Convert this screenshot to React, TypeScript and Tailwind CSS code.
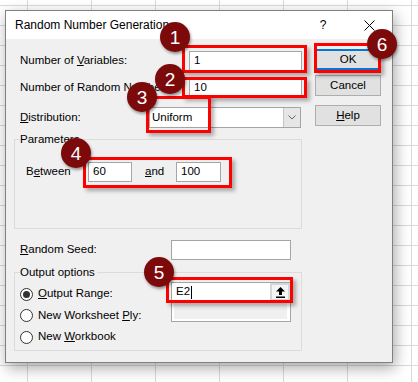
import React from "react";

// Random Number Generation dialog over an Excel sheet, with numbered call-outs

const font = "font-['Liberation_Sans',Arial,sans-serif]";

function TextBox({ className = "", children }: { className?: string; children?: React.ReactNode }) {
  return (
    <div className={`flex h-[20px] shrink-0 items-center border border-[#a5a5a5] bg-white pl-[4px] ${className}`}>
      {children}
    </div>
  );
}

function Button({ children, focused = false, className = "" }: { children: React.ReactNode; focused?: boolean; className?: string }) {
  return (
    <div
      className={`flex h-[21px] w-[66px] items-center justify-center border bg-[#e1e1e1] ${
        focused ? "border-[#0078d7] shadow-[inset_0_0_0_1px_#0078d7]" : "border-[#adadad]"
      } ${className}`}
    >
      {children}
    </div>
  );
}

function Radio({ checked = false }: { checked?: boolean }) {
  return (
    <span className="flex h-[13px] w-[13px] shrink-0 items-center justify-center rounded-full border border-[#333333] bg-white">
      {checked && <span className="h-[7px] w-[7px] rounded-full bg-[#333333]" />}
    </span>
  );
}

function Group({ title, className = "", children }: { title: string; className?: string; children?: React.ReactNode }) {
  return (
    <div className={`relative ml-[8px] w-[288px] shrink-0 border border-[#dcdcdc] ${className}`}>
      <span className="absolute -top-[8px] left-[5px] bg-[#f0f0f0] pr-[2px] leading-[14px]">{title}</span>
      {children}
    </div>
  );
}

function Badge({ n, className }: { n: number; className: string }) {
  return (
    <div
      className={`absolute flex h-[30px] w-[30px] items-center justify-center rounded-full bg-[#7d0a0a] text-[19px] leading-none text-white shadow-[1px_2px_3px_rgba(0,0,0,0.4)] ${className}`}
    >
      {n}
    </div>
  );
}

function RedBox({ className }: { className: string }) {
  return <div className={`absolute border-[3px] border-[#ff0000] shadow-[3px_3px_4px_rgba(0,0,0,0.3)] ${className}`} />;
}

export default function App() {
  return (
    <div
      className={`relative h-[382px] w-[418px] overflow-hidden bg-white bg-[linear-gradient(to_right,#dadada_1px,transparent_1px),linear-gradient(to_bottom,#dadada_1px,transparent_1px)] bg-[length:64px_20px] bg-[position:27px_5px] text-[11.5px] text-black ${font}`}
    >
      {/* dialog window */}
      <div className="absolute left-[5px] top-[10px] flex h-[353px] w-[388px] flex-col border border-[#808080] bg-[#f0f0f0] shadow-[2px_5px_14px_rgba(0,0,0,0.35)]">
        {/* title bar */}
        <div className="flex h-[28px] shrink-0 items-center bg-white">
          <span className="pl-[9px] text-[12px]">Random Number Generation</span>
          <span className="flex-1" />
          <span className="flex h-full w-[46px] items-center justify-center text-[12px]">?</span>
          <span className="flex h-full w-[46px] items-center justify-center">
            <svg width="11" height="11" viewBox="0 0 11 11">
              <path d="M0.5 0.5 L10.5 10.5 M10.5 0.5 L0.5 10.5" stroke="#000" strokeWidth="1" />
            </svg>
          </span>
        </div>

        {/* body */}
        <div className="flex flex-1">
          <div className="flex w-[309px] shrink-0 flex-col">
            <div className="ml-[14px] mt-[12px] flex h-[20px] items-center">
              <span className="w-[169px] shrink-0 whitespace-nowrap">
                Number of <span className="underline">V</span>ariables:
              </span>
              <TextBox className="w-[113px]">1</TextBox>
            </div>
            <div className="ml-[14px] mt-[7px] flex h-[20px] items-center">
              <span className="w-[169px] shrink-0 whitespace-nowrap">Number of Random Numbers:</span>
              <TextBox className="w-[113px]">10</TextBox>
            </div>
            <div className="ml-[14px] mt-[9px] flex h-[21px] items-center">
              <span className="w-[129px] shrink-0 whitespace-nowrap">
                <span className="underline">D</span>istribution:
              </span>
              <div className="flex h-[21px] w-[152px] border border-[#a5a5a5] bg-white">
                <span className="flex flex-1 items-center pl-[2px]">Uniform</span>
                <span className="flex w-[17px] items-center justify-center border-l border-[#c4c4c4] bg-[#e6e6e6]">
                  <svg width="8" height="5" viewBox="0 0 8 5">
                    <path d="M0.5 0.5 L4 4 L7.5 0.5" fill="none" stroke="#606060" strokeWidth="1" />
                  </svg>
                </span>
              </div>
            </div>

            <Group title="Parameters" className="mt-[11px] h-[90px]">
              <div className="ml-[11px] mt-[22px] flex h-[20px] items-center">
                <span className="w-[62px] shrink-0">
                  B<span className="underline">e</span>tween
                </span>
                <TextBox className="w-[44px]">60</TextBox>
                <span className="ml-[13px] w-[31px] shrink-0">
                  <span className="underline">a</span>nd
                </span>
                <TextBox className="w-[45px]">100</TextBox>
              </div>
            </Group>

            <div className="ml-[14px] mt-[11px] flex h-[20px] items-center">
              <span className="w-[151px] shrink-0 whitespace-nowrap">
                <span className="underline">R</span>andom Seed:
              </span>
              <TextBox className="w-[120px]" />
            </div>

            <Group title="Output options" className="mt-[12px] flex h-[79px]">
              <div className="flex w-[156px] shrink-0 flex-col pl-[5px] pt-[10px]">
                <div className="flex h-[22px] items-center gap-[5px]">
                  <Radio checked />
                  <span className="whitespace-nowrap">
                    <span className="underline">O</span>utput Range:
                  </span>
                </div>
                <div className="flex h-[21px] items-center gap-[5px]">
                  <Radio />
                  <span className="whitespace-nowrap">
                    New Worksheet <span className="underline">P</span>ly:
                  </span>
                </div>
                <div className="flex h-[22px] items-center gap-[5px]">
                  <Radio />
                  <span className="whitespace-nowrap">
                    New <span className="underline">W</span>orkbook
                  </span>
                </div>
              </div>
              <div className="flex flex-col pt-[9px]">
                <div className="flex h-[20px] w-[120px] items-center border border-[#a5a5a5] bg-white">
                  <span className="flex flex-1 items-center pl-[4px]">
                    E2
                    <span className="ml-[1px] h-[13px] w-px bg-black" />
                  </span>
                  <span className="flex h-[18px] w-[20px] items-center justify-center border-2 border-[#d6d6d6] bg-[#f4f4f4]">
                    <svg width="9" height="11" viewBox="0 0 9 11">
                      <path d="M4.5 0 L9 4.5 L6 4.5 L6 8 L3 8 L3 4.5 L0 4.5 Z" fill="#000" />
                      <rect x="0" y="9.5" width="9" height="1.5" fill="#000" />
                    </svg>
                  </span>
                </div>
                <div className="h-[20px] w-[120px] border border-[#a5a5a5] bg-white pb-[2px] pl-[2px] pr-[3px]">
                  <div className="h-full bg-[#f0f0f0]" />
                </div>
              </div>
            </Group>
          </div>

          {/* buttons */}
          <div className="flex flex-col pl-[0px]">
            <Button focused className="mt-[10px]">OK</Button>
            <Button className="mt-[5px]">Cancel</Button>
            <Button className="mt-[9px]">
              <span>
                <span className="underline">H</span>elp
              </span>
            </Button>
          </div>
        </div>
      </div>

      {/* call-outs */}
      <RedBox className="left-[182px] top-[45px] h-[28px] w-[125px]" />
      <RedBox className="left-[182px] top-[77px] h-[21px] w-[125px]" />
      <RedBox className="left-[146px] top-[96px] h-[37px] w-[65px]" />
      <RedBox className="left-[83px] top-[157px] h-[31px] w-[149px]" />
      <RedBox className="left-[166px] top-[277px] h-[26px] w-[127px]" />
      <RedBox className="left-[314px] top-[43px] h-[30px] w-[67px]" />

      <Badge n={1} className="left-[160px] top-[22px]" />
      <Badge n={2} className="left-[155px] top-[64px]" />
      <Badge n={3} className="left-[127px] top-[82px]" />
      <Badge n={4} className="left-[61px] top-[138px]" />
      <Badge n={5} className="left-[144px] top-[257px]" />
      <Badge n={6} className="left-[367px] top-[29px]" />
    </div>
  );
}
